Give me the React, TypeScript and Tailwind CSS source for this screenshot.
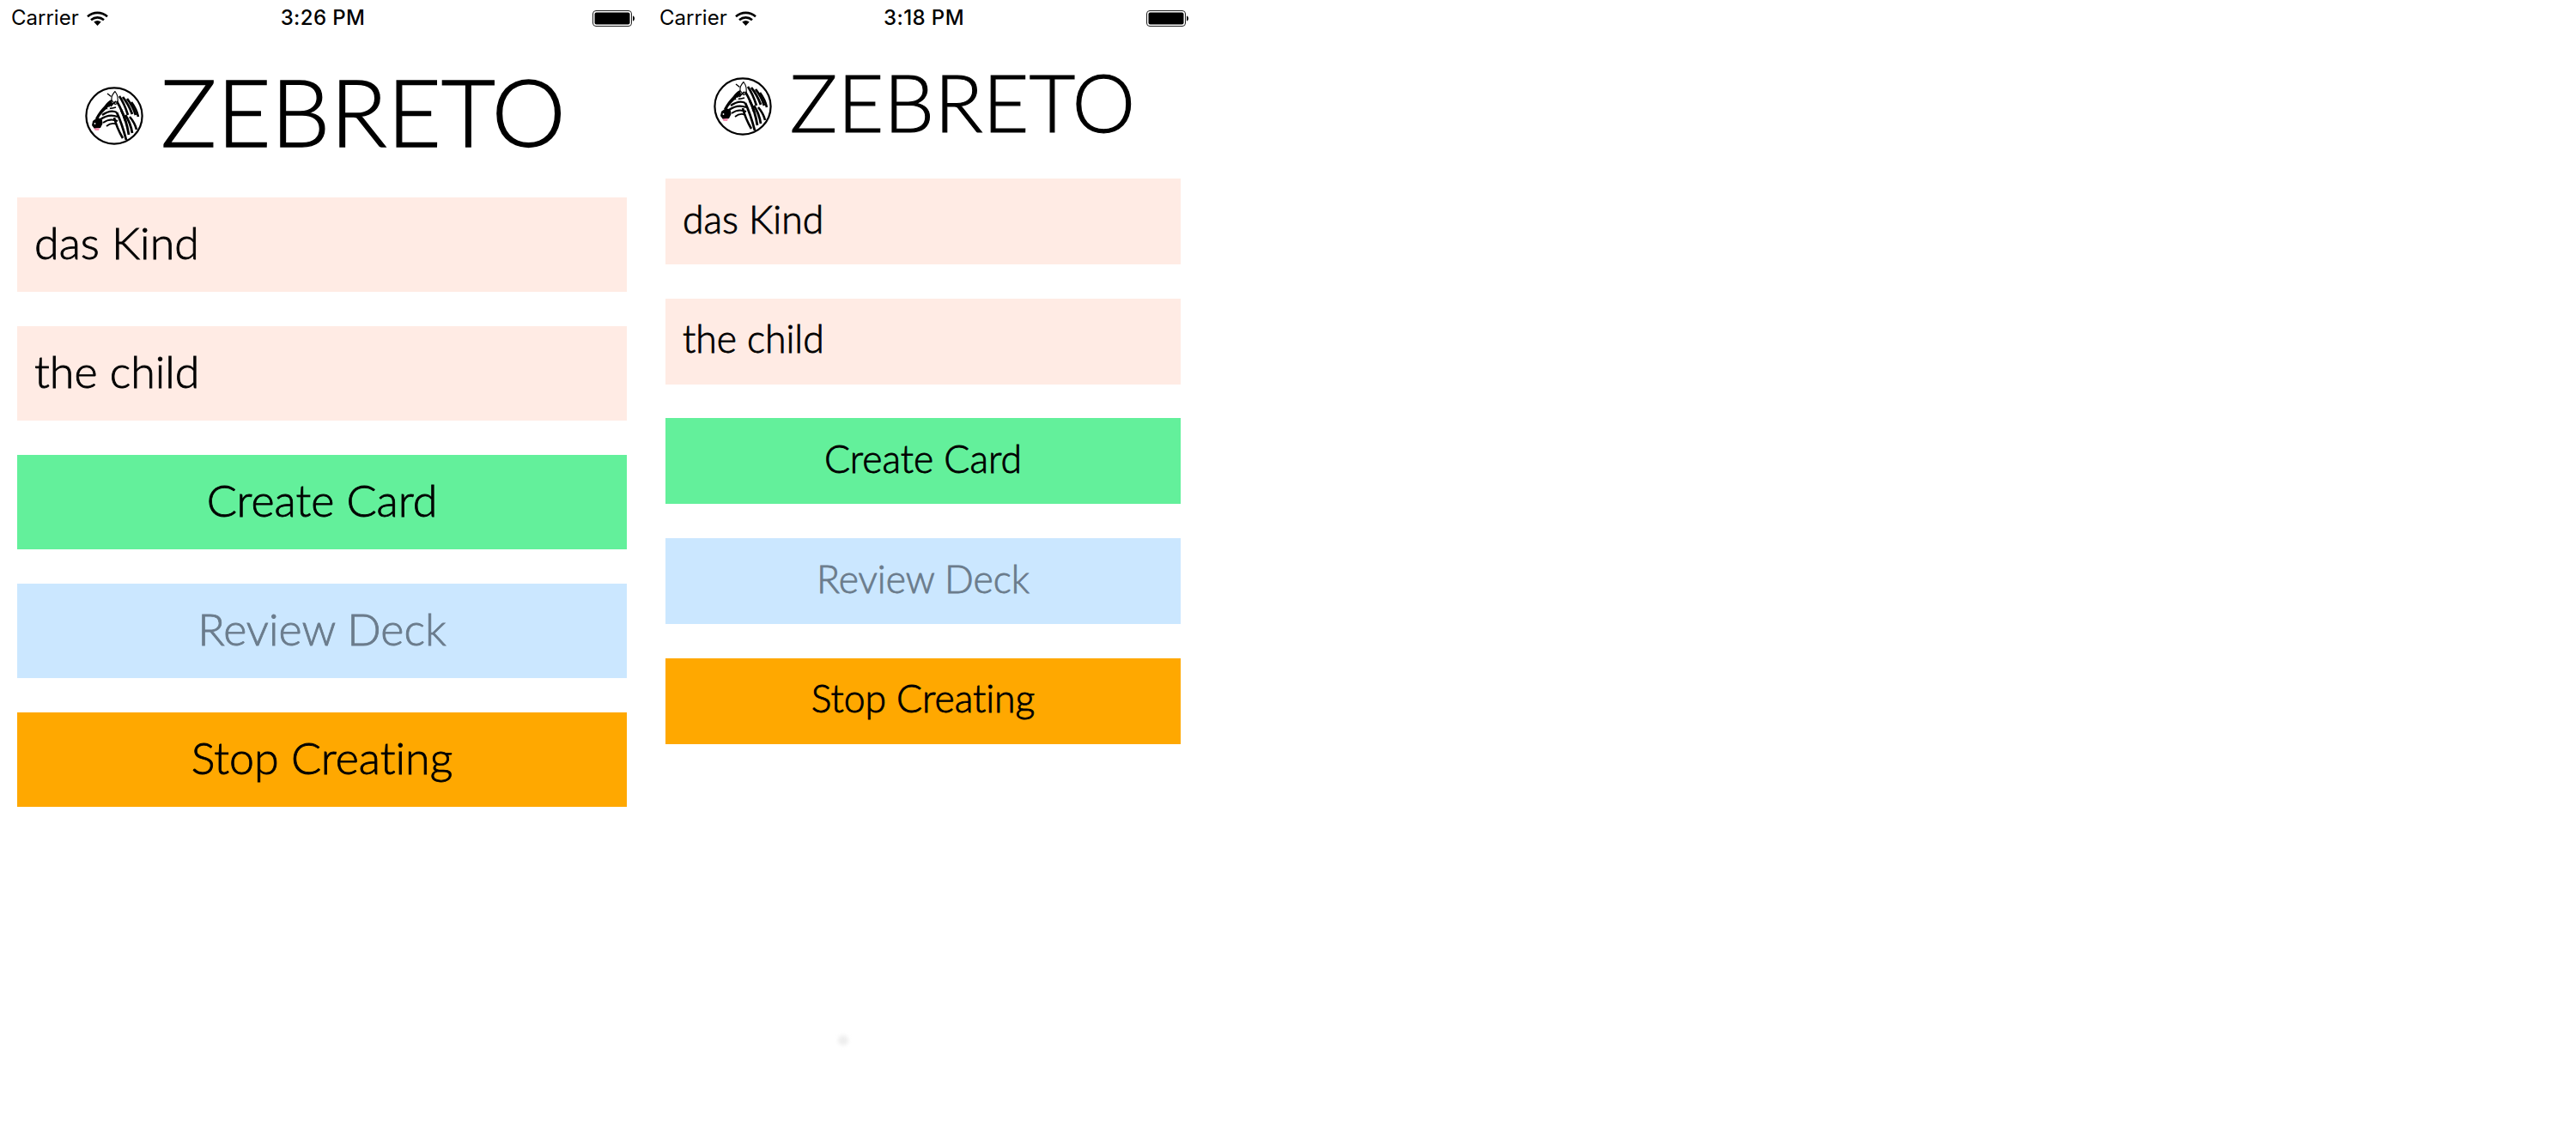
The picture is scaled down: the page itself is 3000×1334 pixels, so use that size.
import React from "react";

const sans = "font-['Lato','Noto_Sans',sans-serif] font-light [font-variant-ligatures:none] [-webkit-text-stroke-width:0.85px]";

function Wifi() {
  return (
    <svg width="25" height="17" viewBox="0 0 25 17" className="block">
      <path d="M1 6.200C7.500 .4 17.500 .4 24 6.200" fill="none" stroke="#000" strokeWidth="2.600" />
      <path d="M5 10.200C9.500 6.400 15.500 6.400 20 10.200" fill="none" stroke="#000" strokeWidth="2.600" />
      <path d="M8.300 12.400C11 10.400 14 10.400 16.700 12.400L12.500 17Z" fill="#000" />
    </svg>
  );
}

function Battery() {
  return (
    <svg width="49" height="19" viewBox="0 0 49 19" className="block">
      <rect x=".5" y=".5" width="45" height="18" rx="3.500" fill="#fff" stroke="#222" />
      <rect x="2.500" y="2.500" width="41" height="14" rx="2" fill="#000" />
      <path d="M47 6.500c1.200.3 2 1.400 2 3s-.8 2.700-2 3Z" fill="#000" />
    </svg>
  );
}

const neck: [string, number][] = [
  ["M40 11Q46 20 50 33", 2.6],
  ["M44 12Q51 21 55 32", 2.8],
  ["M49 14Q56 23 59 33", 2.8],
  ["M54 18Q60 26 62 35", 2.6],
  ["M37 17Q43 27 47 40", 2.6],
  ["M42 27Q48 38 51 56", 2.8],
  ["M47 33Q53 42 55 54", 2.8],
  ["M52 35Q58 42 60 50", 2.6],
  ["M37 30Q43 43 48 62", 2.8],
  ["M34 36Q37 48 44 60", 2.6],
];

const face: [string, number][] = [
  ["M36 17Q32 20 30 23", 1.6],
  ["M24 25Q30 26 36 24", 1.8],
  ["M20 33Q30 26 37 30", 2.2],
  ["M18 38Q28 31 38 35", 2.2],
  ["M21 42Q29 36 38 40", 2],
  ["M25 46Q31 41 37 44", 1.8],
];

function Zebra({ className }: { className: string }) {
  return (
    <svg width="68" height="68" viewBox="0 0 68 68" className={`block shrink-0 ${className}`}>
      <circle cx="34" cy="34" r="32.600" fill="#fff" stroke="#000" strokeWidth="2.200" />
      <g fill="none" stroke="#000" strokeLinecap="butt">
        <path d="M26 8l4.500 3.500" strokeWidth="1.400" />
        <path d="M35 5.500c-2.500 2.500-4.500 6-4 10l4 5 2.500-1c1.500-5 .5-10-2.500-14Z" strokeWidth="1.100" />
        {neck.map(([d, w]) => (
          <path key={d} d={d} strokeWidth={w} />
        ))}
        {face.map(([d, w]) => (
          <path key={d} d={d} strokeWidth={w} />
        ))}
      </g>
      <path d="M31 15c-3 1-6 4-8 7-4 4-8 9-11 15l3 1c3-6 8-11 13-14l4-4Z" fill="#000" />
      <circle cx="27.500" cy="25" r="1.500" fill="#fff" />
      <path d="M13 37c3-1 6 0 7 2l.5 4-2.500 5-7 1-3-4 1-5Z" fill="#000" />
      <circle cx="11.500" cy="43" r=".9" fill="#fff" />
      <path d="M10.500 48.500l6.500-.5-1 3-4.500 0Z" fill="#f58fb0" />
    </svg>
  );
}

function Box({ children, className }: { children: React.ReactNode; className: string }) {
  return (
    <div className={`flex items-center ${className}`}>
      <span className="-translate-y-[3px]">{children}</span>
    </div>
  );
}

function StatusBar({ time }: { time: string }) {
  return (
    <div className="flex h-[40px] items-center pl-[13px] pr-[11px] pt-[2px] font-['Inter',sans-serif] text-[24px] font-normal leading-none [-webkit-text-stroke-width:0]">
      <div className="flex flex-1 items-center gap-[9px]">
        <span>Carrier</span>
        <Wifi />
      </div>
      <span className="font-medium tracking-[0.4px]">{time}</span>
      <div className="flex flex-1 justify-end">
        <Battery />
      </div>
    </div>
  );
}

export default function App() {
  return (
    <div className={`relative flex h-[1334px] w-[3000px] gap-[5px] overflow-hidden bg-white text-black ${sans}`}>
      <section className="flex w-[750px] shrink-0 flex-col">
        <StatusBar time="3:26 PM" />
        <div className="flex h-[190px] items-center justify-center gap-[20px] pb-[14px] pl-[8px]">
          <Zebra className="mt-[14px]" />
          <span className="text-[109px] leading-none [-webkit-text-stroke-width:1.3px]">ZEBRETO</span>
        </div>
        <div className="flex flex-col gap-[40px] px-[20px] text-[52px]">
          <Box className="h-[110px] bg-[#ffebe4] pl-[20px]">das Kind</Box>
          <Box className="h-[110px] bg-[#ffebe4] pl-[20px]">the child</Box>
          <Box className="h-[110px] justify-center bg-[#63f09b]">Create Card</Box>
          <Box className="h-[110px] justify-center bg-[#cbe7ff] text-[#6b7c8c]">Review Deck</Box>
          <Box className="h-[110px] justify-center bg-[#ffa800]">Stop Creating</Box>
        </div>
      </section>
      <section className="relative flex w-[640px] shrink-0 flex-col">
        <StatusBar time="3:18 PM" />
        <div className="flex h-[168px] items-center justify-center gap-[21px] pb-[12px] pl-[3px]">
          <Zebra className="mt-[12px]" />
          <span className="text-[93px] leading-none [-webkit-text-stroke-width:1.1px]">ZEBRETO</span>
        </div>
        <div className="flex flex-col gap-[39.7px] px-[20px] text-[44.5px]">
          <Box className="h-[100px] bg-[#ffebe4] pl-[20px]">das Kind</Box>
          <Box className="h-[100px] bg-[#ffebe4] pl-[20px]">the child</Box>
          <Box className="h-[100px] justify-center bg-[#63f09b]">Create Card</Box>
          <Box className="h-[100px] justify-center bg-[#cbe7ff] text-[#6b7c8c]">Review Deck</Box>
          <Box className="h-[100px] justify-center bg-[#ffa800]">Stop Creating</Box>
        </div>
        <div className="absolute left-[221px] top-[1206px] size-[12px] rounded-full bg-[#eeeeee] blur-[2px]" />
      </section>
    </div>
  );
}
